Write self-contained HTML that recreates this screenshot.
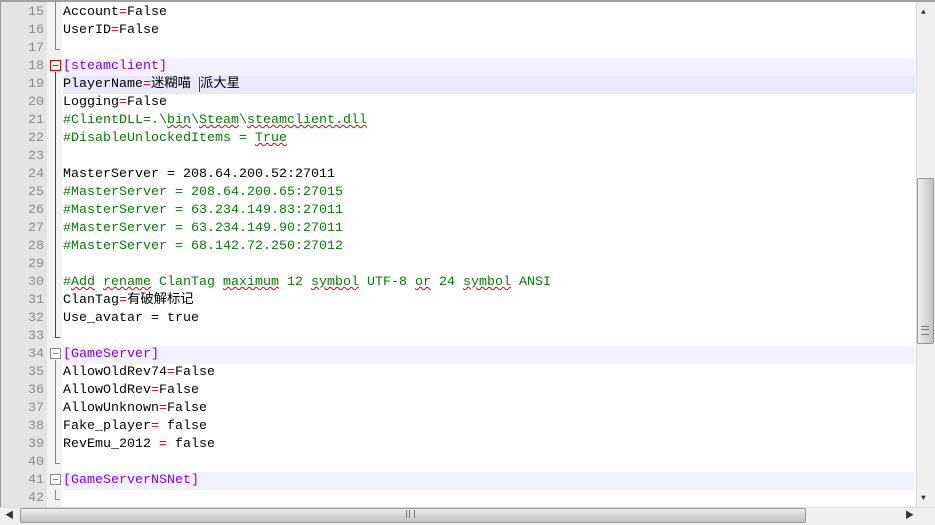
<!DOCTYPE html><html><head><style>
body{margin:0;width:935px;height:525px;overflow:hidden;background:#fff;position:relative;font-family:"Liberation Mono","Noto Sans CJK SC",monospace}
#top{position:absolute;left:0;top:0;width:935px;height:2px;background:#a0a0a0}
#num{position:absolute;left:0;top:2px;width:47px;height:505px;background:#e4e4e4;border-left:1px solid #999}
#fold{position:absolute;left:47px;top:2px;width:15px;height:505px;background:#f3f3f3}
.r{position:absolute;left:0;height:18px;line-height:18px;font-size:13.33px;white-space:pre}
.n{width:44px;text-align:right;color:#8a8a8a}
.t{left:63px;width:852px;color:#000}
.sec{background:#f1f1ff}.cur{background:#e8e8ff}
.e{color:#e00000}.c{color:#008000}.s{color:#8000ff}
.u{text-decoration:underline wavy #e00000;text-decoration-thickness:1px}
#vs{position:absolute;left:916px;top:2px;width:18px;height:505px;background:#f0f0f0;border-left:1px solid #ddd}
#vt{position:absolute;left:917px;top:178px;width:15px;height:164px;background:linear-gradient(90deg,#eee,#d8d8d8,#c4c4c4);border:1px solid #999;border-radius:2px}
#hs{position:absolute;left:0;top:507px;width:935px;height:17px;background:#f0f0f0;border-top:1px solid #ddd}
#ht{position:absolute;left:20px;top:508px;width:784px;height:13px;background:linear-gradient(#eee,#d6d6d6,#c4c4c4);border:1px solid #999;border-radius:2px}
</style></head><body>
<div id="top"></div><div id="num"></div><div id="fold"></div>
<svg style="position:absolute;left:0;top:2px" width="935" height="505">
<g stroke="#888" fill="none" stroke-width="1">
<path d="M55.5 -2V47.5H60"/>
<path d="M55.5 358V461.5H60"/>
<rect x="50.5" y="346.5" width="10" height="10" fill="#fff"/><path d="M53 351.5H58.5"/>
<path d="M55.5 488V497.5H60"/>
<rect x="50.5" y="472.5" width="10" height="10" fill="#fff"/><path d="M53 477.5H58.5"/>
</g>
<g stroke="#e00000" fill="none">
<path d="M55.5 70V335.5H60"/>
<rect x="50.5" y="58.5" width="10" height="10" fill="#fff"/><path d="M53 63.5H58.5"/>
</g>
</svg>
<div style="position:absolute;left:0;top:4px;width:935px">
<div class="r n" style="top:0">15</div><div class="r t" style="top:0">Account<span class="e">=</span>False</div>
<div class="r n" style="top:18px">16</div><div class="r t" style="top:18px">UserID<span class="e">=</span>False</div>
<div class="r n" style="top:36px">17</div>
<div class="r n" style="top:54px">18</div><div class="r t sec s" style="top:54px">[steamclient]</div>
<div class="r n" style="top:72px">19</div><div class="r t cur" style="top:72px">PlayerName<span class="e">=</span>迷糊喵 <span style="border-left:1px solid #8000ff"></span>派大星</div>
<div class="r n" style="top:90px">20</div><div class="r t" style="top:90px">Logging<span class="e">=</span>False</div>
<div class="r n" style="top:108px">21</div><div class="r t c" style="top:108px">#ClientDLL=.\<span class="u">bin</span>\<span class="u">Steam</span>\<span class="u">steamclient.dll</span></div>
<div class="r n" style="top:126px">22</div><div class="r t c" style="top:126px">#DisableUnlockedItems = <span class="u">True</span></div>
<div class="r n" style="top:144px">23</div>
<div class="r n" style="top:162px">24</div><div class="r t" style="top:162px">MasterServer = 208.64.200.52:27011</div>
<div class="r n" style="top:180px">25</div><div class="r t c" style="top:180px">#MasterServer = 208.64.200.65:27015</div>
<div class="r n" style="top:198px">26</div><div class="r t c" style="top:198px">#MasterServer = 63.234.149.83:27011</div>
<div class="r n" style="top:216px">27</div><div class="r t c" style="top:216px">#MasterServer = 63.234.149.90:27011</div>
<div class="r n" style="top:234px">28</div><div class="r t c" style="top:234px">#MasterServer = 68.142.72.250:27012</div>
<div class="r n" style="top:252px">29</div>
<div class="r n" style="top:270px">30</div><div class="r t c" style="top:270px">#<span class="u">Add</span> <span class="u">rename</span> ClanTag <span class="u">maximum</span> 12 <span class="u">symbol</span> UTF-8 <span class="u">or</span> 24 <span class="u">symbol</span> ANSI</div>
<div class="r n" style="top:288px">31</div><div class="r t" style="top:288px">ClanTag<span class="e">=</span>有破解标记</div>
<div class="r n" style="top:306px">32</div><div class="r t" style="top:306px">Use_avatar = true</div>
<div class="r n" style="top:324px">33</div>
<div class="r n" style="top:342px">34</div><div class="r t sec s" style="top:342px">[GameServer]</div>
<div class="r n" style="top:360px">35</div><div class="r t" style="top:360px">AllowOldRev74<span class="e">=</span>False</div>
<div class="r n" style="top:378px">36</div><div class="r t" style="top:378px">AllowOldRev<span class="e">=</span>False</div>
<div class="r n" style="top:396px">37</div><div class="r t" style="top:396px">AllowUnknown<span class="e">=</span>False</div>
<div class="r n" style="top:414px">38</div><div class="r t" style="top:414px">Fake_player<span class="e">=</span> false</div>
<div class="r n" style="top:432px">39</div><div class="r t" style="top:432px">RevEmu_2012 <span class="e">=</span> false</div>
<div class="r n" style="top:450px">40</div>
<div class="r n" style="top:468px">41</div><div class="r t sec s" style="top:468px">[GameServerNSNet]</div>
<div class="r n" style="top:486px">42</div>
</div>
<div id="top" style="z-index:2"></div>
<div id="vs"></div><div id="vt"></div><div id="hs"></div><div id="ht"></div>
<div style="position:absolute;left:921px;top:8px;font-size:8px;color:#333">▲</div>
<div style="position:absolute;left:921px;top:494px;font-size:8px;color:#333">▼</div>
<div style="position:absolute;left:5px;top:508px;font-size:9px;color:#333">◀</div>
<div style="position:absolute;left:905px;top:508px;font-size:9px;color:#333">▶</div>
<div style="position:absolute;left:921px;top:326px;width:8px;height:7px;border-top:1px solid #777;border-bottom:1px solid #777"><div style="margin-top:2px;border-top:1px solid #777"></div></div>
<div style="position:absolute;left:406px;top:510px;width:7px;height:8px;border-left:1px solid #777;border-right:1px solid #777"><div style="margin-left:2px;width:0;height:8px;border-left:1px solid #777"></div></div>
</body></html>
